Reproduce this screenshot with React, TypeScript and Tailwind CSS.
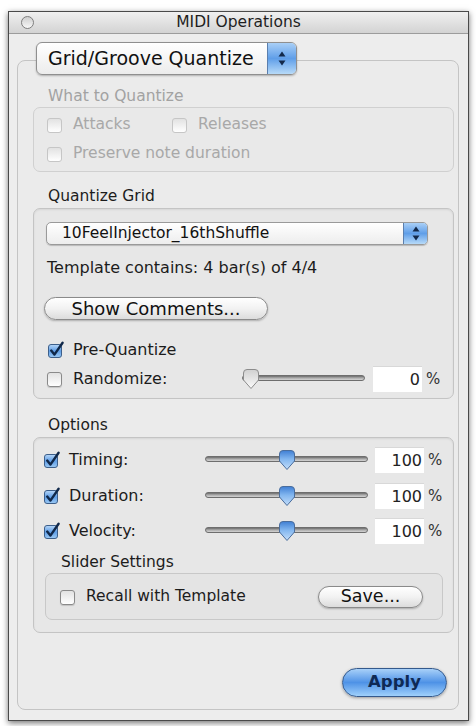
import React from "react";

function Checkbox({ checked = false, disabled = false }: { checked?: boolean; disabled?: boolean }) {
  if (checked) {
    return (
      <svg width="18" height="18" viewBox="0 0 18 18" className="shrink-0">
        <defs>
          <linearGradient id="cbFill" x1="0" y1="0" x2="0" y2="1">
            <stop offset="0" stopColor="#b9d8f8" />
            <stop offset="0.5" stopColor="#5e9de6" />
            <stop offset="1" stopColor="#9ccaf5" />
          </linearGradient>
        </defs>
        <rect x="1.5" y="3.5" width="13" height="13" rx="2.5" fill="url(#cbFill)" stroke="#3d5f8a" />
        <path d="M4.2 9.6 L7.4 13.6 L15.6 1.8" stroke="#10284a" strokeWidth="2.4" fill="none" strokeLinecap="round" strokeLinejoin="round" />
      </svg>
    );
  }
  return (
    <span
      className={`mt-[1px] inline-block h-[15px] w-[15px] shrink-0 rounded-[3px] border bg-gradient-to-b from-[#e2e2e2] to-white ${
        disabled ? "border-[#c6c6c6]" : "border-[#8a8a8a] shadow-[0_1px_1px_rgba(0,0,0,0.15)]"
      }`}
    />
  );
}

function Stepper({ h }: { h: number }) {
  return (
    <svg width="10" height={h} viewBox={`0 0 10 ${h}`}>
      <path d={`M5 ${h / 2 - 7} L8.5 ${h / 2 - 2} L1.5 ${h / 2 - 2} Z`} fill="#13294a" />
      <path d={`M5 ${h / 2 + 7} L8.5 ${h / 2 + 2} L1.5 ${h / 2 + 2} Z`} fill="#13294a" />
    </svg>
  );
}

function Thumb({ blue }: { blue: boolean }) {
  return (
    <svg width="20" height="22" viewBox="0 0 20 22">
      <defs>
        <linearGradient id="thBlue" x1="0" y1="0" x2="0" y2="1">
          <stop offset="0" stopColor="#3f7fd4" />
          <stop offset="0.45" stopColor="#82b6ef" />
          <stop offset="1" stopColor="#c4defa" />
        </linearGradient>
        <linearGradient id="thGray" x1="0" y1="0" x2="0" y2="1">
          <stop offset="0" stopColor="#d0d0d0" />
          <stop offset="1" stopColor="#fbfbfb" />
        </linearGradient>
      </defs>
      <path
        d="M2.5 5 Q2.5 1.5 6 1.5 H14 Q17.5 1.5 17.5 5 V12 L10 20.5 L2.5 12 Z"
        fill={blue ? "url(#thBlue)" : "url(#thGray)"}
        stroke={blue ? "#4a6d9c" : "#8c8c8c"}
      />
    </svg>
  );
}

function Slider({ width, pos, blue = true }: { width: number; pos: number; blue?: boolean }) {
  return (
    <div className="relative h-[22px]" style={{ width }}>
      <div className="absolute left-0 right-0 top-[7px] h-[6px] rounded-full border border-[#6e6e6e] bg-gradient-to-b from-[#6c6c6c] via-[#adadad] to-[#d4d4d4]" />
      <div className="absolute top-0" style={{ left: pos - 10 }}>
        <Thumb blue={blue} />
      </div>
    </div>
  );
}

function Field({ value }: { value: string }) {
  return (
    <div className="flex items-center gap-[4px]">
      <div className="flex h-[26px] w-[49px] items-center justify-end border-t border-[#d8d8d8] bg-white pr-[2px] text-[16px] text-[#222]">
        {value}
      </div>
      <span className="text-[15px] text-[#333]">%</span>
    </div>
  );
}

function OptionRow({ label }: { label: string }) {
  return (
    <div className="flex h-[26px] items-center">
      <div className="flex w-[171px] items-center gap-[8px] pl-[9px]">
        <Checkbox checked />
        <span className="text-[16px] text-[#1c1c1c]">{label}</span>
      </div>
      <Slider width={163} pos={82} />
      <div className="ml-[7px]">
        <Field value="100" />
      </div>
    </div>
  );
}

export default function App() {
  return (
    <div className="min-h-[726px] w-[476px] bg-white pl-[8px] pt-[11px] font-['DejaVu_Sans',sans-serif]">
      <div className="flex h-[710px] w-[461px] flex-col border border-[#4a4a4a] bg-[#ededed] shadow-[0_2px_6px_rgba(0,0,0,0.55)]">
        {/* Title bar */}
        <div className="relative flex h-[22px] items-center justify-center border-b border-[#9c9c9c] bg-gradient-to-b from-[#f0f0f0] to-[#d3d3d3]">
          <span className="absolute left-[12px] top-[4px] h-[13px] w-[13px] rounded-full border border-[#7e7e7e] bg-gradient-to-b from-[#cfcfcf] to-[#f7f7f7]" />
          <span className="text-[15.5px] text-[#1e1e1e]">MIDI Operations</span>
        </div>

        <div className="flex flex-col pl-[8px]">
          {/* Main popup */}
          <div className="relative z-10 ml-[19px] mt-[8px] flex h-[33px] w-[261px] overflow-hidden rounded-[6px] border border-[#8f8f8f] bg-gradient-to-b from-white to-[#ececec] shadow-[0_1px_2px_rgba(0,0,0,0.25)]">
            <span className="flex flex-1 items-center pl-[11px] text-[19px] text-[#111]">Grid/Groove Quantize</span>
            <span className="flex w-[29px] items-center justify-center border-l border-[#5b7fae] bg-gradient-to-b from-[#a9cff6] via-[#5f9ee8] to-[#b7daf8]">
              <Stepper h={31} />
            </span>
          </div>

          {/* Outer frame */}
          <div className="-mt-[15px] flex h-[650px] w-[442px] flex-col rounded-[8px] border border-[#c4c4c4] bg-[#ebebeb] pl-[15px] pr-[4px]">
            <div className="ml-[15px] mt-[27px] h-[16px] text-[15.5px] leading-[16px] text-[#a2a2a2]">What to Quantize</div>
            <div className="mt-[3px] flex h-[65px] flex-col rounded-[7px] border border-[#d0d0d0] bg-[#e9e9e9] pl-[13px] pt-[8px]">
              <div className="flex h-[18px] items-center text-[15.5px] text-[#a8a8a8]">
                <div className="flex w-[125px] items-center gap-[11px]">
                  <Checkbox disabled />
                  <span>Attacks</span>
                </div>
                <div className="flex items-center gap-[11px]">
                  <Checkbox disabled />
                  <span>Releases</span>
                </div>
              </div>
              <div className="mt-[11px] flex h-[18px] items-center gap-[11px] text-[15.5px] text-[#a8a8a8]">
                <Checkbox disabled />
                <span>Preserve note duration</span>
              </div>
            </div>

            <div className="ml-[15px] mt-[16px] h-[16px] text-[15.5px] leading-[16px] text-[#1c1c1c]">Quantize Grid</div>
            <div className="mt-[4px] flex h-[191px] flex-col rounded-[7px] border border-[#c4c4c4] bg-[#e7e7e7] shadow-[inset_0_1px_2px_rgba(0,0,0,0.08)]">
              <div className="ml-[12px] mt-[13px] flex h-[23px] w-[382px] overflow-hidden rounded-[5px] border border-[#9a9a9a] bg-gradient-to-b from-white to-[#ededed] shadow-[0_1px_1px_rgba(0,0,0,0.2)]">
                <span className="flex flex-1 items-center pl-[15px] text-[15.5px] text-[#111]">10FeelInjector_16thShuffle</span>
                <span className="flex w-[24px] items-center justify-center border-l border-[#5b7fae] bg-gradient-to-b from-[#a9cff6] via-[#5f9ee8] to-[#b7daf8]">
                  <Stepper h={21} />
                </span>
              </div>
              <div className="ml-[13px] mt-[14px] h-[18px] text-[16px] leading-[18px] text-[#1c1c1c]">
                Template contains: 4 bar(s) of 4/4
              </div>
              <div className="ml-[10px] mt-[20px] flex h-[23px] w-[224px] items-center justify-center rounded-full border border-[#8a8a8a] bg-gradient-to-b from-white via-[#f2f2f2] to-[#dcdcdc] text-[18px] text-[#111] shadow-[0_1px_2px_rgba(0,0,0,0.25)]">
                Show Comments...
              </div>
              <div className="ml-[13px] mt-[21px] flex h-[18px] items-center gap-[8px] text-[16px] text-[#1c1c1c]">
                <Checkbox checked />
                <span>Pre-Quantize</span>
              </div>
              <div className="ml-[13px] mt-[7px] flex h-[26px] items-center text-[16px] text-[#1c1c1c]">
                <div className="flex w-[195px] items-center gap-[11px]">
                  <Checkbox />
                  <span>Randomize:</span>
                </div>
                <Slider width={123} pos={9} blue={false} />
                <div className="ml-[8px]">
                  <Field value="0" />
                </div>
              </div>
            </div>

            <div className="ml-[15px] mt-[18px] h-[16px] text-[15.5px] leading-[16px] text-[#1c1c1c]">Options</div>
            <div className="mt-[4px] flex h-[196px] flex-col rounded-[7px] border border-[#c4c4c4] bg-[#e7e7e7] shadow-[inset_0_1px_2px_rgba(0,0,0,0.08)]">
              <div className="mt-[9px]">
                <OptionRow label="Timing:" />
              </div>
              <div className="mt-[10px]">
                <OptionRow label="Duration:" />
              </div>
              <div className="mt-[9px]">
                <OptionRow label="Velocity:" />
              </div>
              <div className="ml-[27px] mt-[10px] h-[16px] text-[15.5px] leading-[16px] text-[#1c1c1c]">Slider Settings</div>
              <div className="ml-[11px] mt-[3px] flex h-[47px] w-[398px] items-center rounded-[7px] border border-[#c8c8c8] bg-[#e4e4e4] pl-[14px] pr-[19px]">
                <Checkbox />
                <span className="ml-[11px] flex-1 text-[15.5px] text-[#1c1c1c]">Recall with Template</span>
                <div className="flex h-[22px] w-[105px] items-center justify-center rounded-full border border-[#8a8a8a] bg-gradient-to-b from-white via-[#f2f2f2] to-[#dcdcdc] text-[17.5px] text-[#111] shadow-[0_1px_2px_rgba(0,0,0,0.25)]">
                  Save...
                </div>
              </div>
            </div>

            <div className="mr-[7px] mt-[35px] flex h-[29px] w-[105px] items-center justify-center self-end rounded-full border border-[#34598c] bg-gradient-to-b from-[#a8d0f8] via-[#4e92e6] to-[#9fd0fb] text-[16.5px] font-bold text-[#0f2a55] shadow-[0_1px_3px_rgba(0,0,0,0.35)]">
              Apply
            </div>
          </div>
        </div>
      </div>
    </div>
  );
}
